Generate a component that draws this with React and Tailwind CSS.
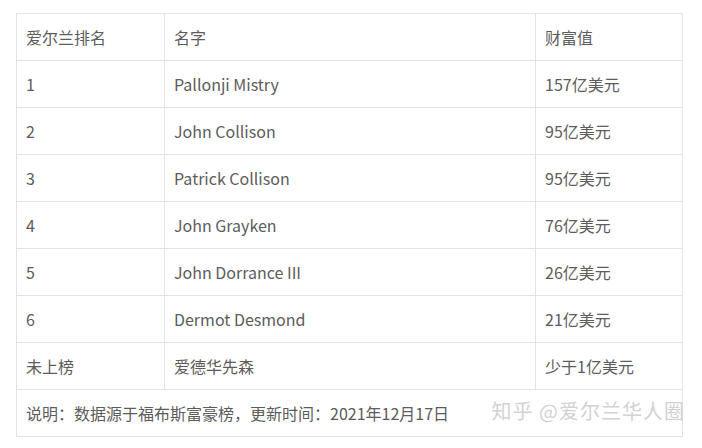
import React from "react";

const rows = [
  ["1", "Pallonji Mistry", "157亿美元"],
  ["2", "John Collison", "95亿美元"],
  ["3", "Patrick Collison", "95亿美元"],
  ["4", "John Grayken", "76亿美元"],
  ["5", "John Dorrance III", "26亿美元"],
  ["6", "Dermot Desmond", "21亿美元"],
  ["未上榜", "爱德华先森", "少于1亿美元"],
];

export default function App() {
  return (
    <div
      className="w-[702px] h-[448px] bg-white pt-[13px] pl-[16px] text-[#5c5c5c] text-[16px]"
      style={{ fontFamily: '"Microsoft YaHei", "Noto Sans CJK SC", sans-serif' }}
    >
      <div className="relative w-[666px]">
        <table className="w-full border-collapse table-fixed">
          <colgroup>
            <col className="w-[148px]" />
            <col className="w-[371px]" />
            <col className="w-[147px]" />
          </colgroup>
          <tbody>
            <tr className="h-[47px]">
              <td className="border border-[#e3e3e3] px-[9px]">爱尔兰排名</td>
              <td className="border border-[#e3e3e3] px-[9px]">名字</td>
              <td className="border border-[#e3e3e3] px-[9px]">财富值</td>
            </tr>
            {rows.map((r, i) => (
              <tr key={i} className="h-[47px]">
                <td className="border border-[#e3e3e3] px-[9px]">{r[0]}</td>
                <td className="border border-[#e3e3e3] px-[9px]">{r[1]}</td>
                <td className="border border-[#e3e3e3] px-[9px]">{r[2]}</td>
              </tr>
            ))}
            <tr className="h-[47px]">
              <td colSpan={3} className="border border-[#e3e3e3] px-[9px]">
                说明：数据源于福布斯富豪榜，更新时间：2021年12月17日
              </td>
            </tr>
          </tbody>
        </table>
        {/* 水印 */}
        <div className="absolute right-[-3px] bottom-[11px] text-[20px] tracking-[1px] text-[#d2d2d2] whitespace-nowrap">
          知乎 @爱尔兰华人圈
        </div>
      </div>
    </div>
  );
}
